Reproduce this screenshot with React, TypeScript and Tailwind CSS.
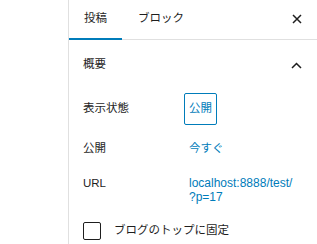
const font = { fontFamily: '"Liberation Sans", "Noto Sans CJK JP", sans-serif' };

function Row({ label, children, top = false }: { label: string; children: React.ReactNode; top?: boolean }) {
  return (
    <div className={`flex ${top ? "items-start" : "items-center h-[32px]"}`}>
      <span className={`w-[101px] shrink-0 text-[#1e1e1e] ${top ? "pt-[3px] leading-[14px]" : ""}`}>{label}</span>
      {children}
    </div>
  );
}

export default function App() {
  return (
    <div
      className="flex h-[244px] w-[317px] overflow-hidden bg-white text-[11.5px] text-[#1e1e1e]"
      style={font}
    >
      <div className="w-[68px] shrink-0" />
      <aside className="flex flex-1 flex-col border-l border-[#e0e0e0]">
        {/* Tabs */}
        <header className="flex h-[40px] items-stretch border-b border-[#e0e0e0]">
          <button className="relative flex items-center px-[15px] pb-[2px] text-[#1e1e1e]">
            投稿
            <span className="absolute -bottom-[1px] left-0 right-0 h-[2px] bg-[#007cba]" />
          </button>
          <button className="flex items-center px-[16px] pb-[2px] text-[#1e1e1e]">ブロック</button>
          <button
            aria-label="閉じる"
            className="ml-auto mr-[8px] flex w-[24px] items-center justify-center pb-[2px]"
          >
            <svg width="10" height="10" viewBox="0 0 10 10" fill="none">
              <path d="M1 1L9 9M9 1L1 9" stroke="#1e1e1e" strokeWidth="1.5" />
            </svg>
          </button>
        </header>

        {/* 概要 */}
        <section className="px-[14px] pt-[15px]">
          <div className="flex h-[20px] items-center justify-between">
            <span>概要</span>
            <svg width="11" height="7" viewBox="0 0 11 7" fill="none" className="mr-[1px]">
              <path d="M1 6L5.5 1.5L10 6" stroke="#1e1e1e" strokeWidth="1.5" />
            </svg>
          </div>

          <div className="mt-[18px] flex flex-col gap-[8px]">
            <Row label="表示状態">
              <button className="flex h-[32px] items-center rounded-[2px] border border-[#007cba] px-[4px] text-[#007cba]">
                公開
              </button>
            </Row>
            <Row label="公開">
              <button className="flex h-[32px] items-center border border-transparent px-[4px] text-[#007cba]">
                今すぐ
              </button>
            </Row>
            <Row label="URL" top>
              <a className="block w-[116px] border border-transparent px-[4px] pt-[2px] text-[12px] leading-[14px] text-[#007cba]">
                localhost:8888/test/
                <br />
                ?p=17
              </a>
            </Row>
          </div>

          <label className="mt-[17px] flex items-center">
            <span className="h-[18px] w-[18px] shrink-0 rounded-[2px] border border-[#1e1e1e]" />
            <span className="ml-[13px]">ブログのトップに固定</span>
          </label>
        </section>
      </aside>
    </div>
  );
}
